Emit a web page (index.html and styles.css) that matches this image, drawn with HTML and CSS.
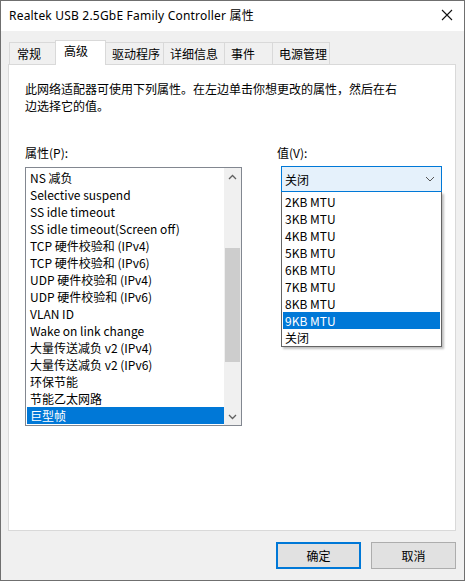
FILE: index.html
```html
<!DOCTYPE html>
<html lang="zh-CN">
<head>
<meta charset="utf-8">
<link rel="stylesheet" href="styles.css">
</head>
<body>
<div class="window">
  <div class="titlebar">
    <span class="title">Realtek USB 2.5GbE Family Controller 属性</span>
    <svg class="close" width="12" height="12" viewBox="0 0 12 12"><path d="M1 1 L11 11 M11 1 L1 11" stroke="#111" stroke-width="1.1" fill="none"/></svg>
  </div>
  <div class="body">
    <div class="tabs">
      <div class="tab first w47">常规</div>
      <div class="tab active w51">高级</div>
      <div class="tab w58">驱动程序</div>
      <div class="tab w61">详细信息</div>
      <div class="tab w48">事件</div>
      <div class="tab w57">电源管理</div>
    </div>
    <div class="panel">
      <p class="desc">此网络适配器可使用下列属性。在左边单击你想更改的属性，然后在右边选择它的值。</p>
      <div class="cols">
        <div class="col-left">
          <div class="label">属性(P):</div>
          <div class="listbox">
            <div class="items">
              <div class="item">NS 减负</div>
              <div class="item">Selective suspend</div>
              <div class="item">SS idle timeout</div>
              <div class="item">SS idle timeout(Screen off)</div>
              <div class="item">TCP 硬件校验和 (IPv4)</div>
              <div class="item">TCP 硬件校验和 (IPv6)</div>
              <div class="item">UDP 硬件校验和 (IPv4)</div>
              <div class="item">UDP 硬件校验和 (IPv6)</div>
              <div class="item">VLAN ID</div>
              <div class="item">Wake on link change</div>
              <div class="item">大量传送减负 v2 (IPv4)</div>
              <div class="item">大量传送减负 v2 (IPv6)</div>
              <div class="item">环保节能</div>
              <div class="item">节能乙太网路</div>
              <div class="item selected">巨型帧</div>
            </div>
            <div class="scrollbar">
              <div class="arrow"><svg width="9" height="6" viewBox="0 0 9 6"><path d="M1 5 L4.5 1.5 L8 5" stroke="#606060" stroke-width="1.3" fill="none"/></svg></div>
              <div class="track">
                <div class="thumb"></div>
              </div>
              <div class="arrow"><svg width="9" height="6" viewBox="0 0 9 6"><path d="M1 1 L4.5 4.5 L8 1" stroke="#606060" stroke-width="1.3" fill="none"/></svg></div>
            </div>
          </div>
        </div>
        <div class="col-right">
          <div class="label">值(V):</div>
          <div class="combo">
            <span>关闭</span>
            <svg width="10" height="6" viewBox="0 0 10 6"><path d="M1 1 L5 5 L9 1" stroke="#555" stroke-width="1" fill="none"/></svg>
          </div>
          <div class="dropdown">
            <div class="opt">2KB MTU</div>
            <div class="opt">3KB MTU</div>
            <div class="opt">4KB MTU</div>
            <div class="opt">5KB MTU</div>
            <div class="opt">6KB MTU</div>
            <div class="opt">7KB MTU</div>
            <div class="opt">8KB MTU</div>
            <div class="opt selected">9KB MTU</div>
            <div class="opt">关闭</div>
          </div>
        </div>
      </div>
    </div>
    <div class="buttons">
      <button class="btn default">确定</button>
      <button class="btn">取消</button>
    </div>
  </div>
</div>
</body>
</html>
```
FILE: styles.css
```css
* { box-sizing: border-box; }
html, body { margin: 0; padding: 0; }
body {
  width: 465px;
  height: 581px;
  font-family: "Noto Sans CJK SC", "Noto Sans", sans-serif;
  font-size: 12px;
  color: #000;
  background: #f0f0f0;
}
.window {
  width: 465px;
  height: 581px;
  border: 1px solid #6f6f6f;
  display: flex;
  flex-direction: column;
  background: #f0f0f0;
}
.titlebar {
  height: 30px;
  background: #fff;
  display: flex;
  align-items: center;
  justify-content: space-between;
  padding: 0 11px 0 8px;
  flex: none;
}
.title {
  font-family: "Noto Sans", "Noto Sans CJK SC", sans-serif;
  font-size: 12px;
  letter-spacing: 0.2px;
  color: #000;
  position: relative;
  top: -1px;
}
.close { position: relative; top: -1px; }
.body {
  flex: 1;
  display: flex;
  flex-direction: column;
  padding: 9px 8px 0 7px;
}
.tabs {
  display: flex;
  align-items: flex-end;
  height: 24px;
  padding-left: 1px;
  position: relative;
  z-index: 1;
}
.tab {
  height: 22px;
  border: 1px solid #d9d9d9;
  border-bottom: none;
  border-left: none;
  background: #f0f0f0;
  padding-left: 6px;
  line-height: 21px;
  white-space: nowrap;
}
.tab.first { border-left: 1px solid #d9d9d9; padding-left: 7px; }
.tab.active {
  height: 25px;
  background: #fff;
  border-left: 1px solid #d9d9d9;
  margin-left: -1px;
  margin-bottom: -1px;
  padding-left: 8px;
  line-height: 19px;
}
.w47 { width: 47px; }
.w51 { width: 51px; }
.w58 { width: 58px; }
.w61 { width: 61px; }
.w48 { width: 48px; }
.w57 { width: 57px; }
.panel {
  height: 467px;
  background: #fff;
  border: 1px solid #d9d9d9;
  padding: 15px 0 0 16px;
}
.desc {
  margin: 0;
  width: 380px;
  line-height: 17px;
}
.cols {
  display: flex;
  margin-top: 31px;
}
.label {
  line-height: 16px;
  height: 16px;
}
.col-left { width: 252px; }
.listbox {
  margin-top: 6px;
  width: 217px;
  height: 259px;
  border: 1px solid #828790;
  display: flex;
  padding: 1px 0 0 1px;
}
.items { flex: 1; }
.item {
  height: 17px;
  line-height: 17px;
  padding-left: 3px;
  white-space: nowrap;
}
.item.selected, .opt.selected {
  background: #0078d7;
  color: #fff;
}
.scrollbar {
  width: 17px;
  margin-top: -1px;
  background: #f0f0f0;
  display: flex;
  flex-direction: column;
}
.arrow {
  height: 17px;
  display: flex;
  align-items: center;
  justify-content: center;
}
.track {
  flex: 1;
  display: flex;
  flex-direction: column;
  justify-content: flex-end;
  padding-bottom: 46px;
}
.thumb {
  height: 114px;
  margin: 0 1px;
  background: #cdcdcd;
}
.col-right { width: 165px; }
.combo {
  margin-top: 5px;
  margin-left: 4px;
  width: 161px;
  height: 26px;
  border: 1px solid #0078d7;
  background: #e5f1fb;
  display: flex;
  align-items: center;
  justify-content: space-between;
  padding: 0 6px 0 3px;
}
.dropdown {
  margin-left: 4px;
  width: 161px;
  height: 155px;
  border: 1px solid #646464;
  border-top: none;
  background: #fff;
  box-shadow: 2px 2px 2px rgba(0,0,0,0.25);
  padding: 1px 1px 0 1px;
  position: relative;
  z-index: 2;
}
.opt {
  height: 17px;
  line-height: 17px;
  padding-left: 2px;
}
.buttons {
  display: flex;
  justify-content: flex-end;
  gap: 10px;
  padding-top: 11px;
  padding-right: 0;
}
.btn {
  width: 85px;
  height: 27px;
  font-family: "Noto Sans CJK SC", sans-serif;
  font-size: 12px;
  background: #e1e1e1;
  border: 1px solid #adadad;
  color: #000;
  padding: 0;
}
.btn.default {
  border: 2px solid #0078d7;
}
```
